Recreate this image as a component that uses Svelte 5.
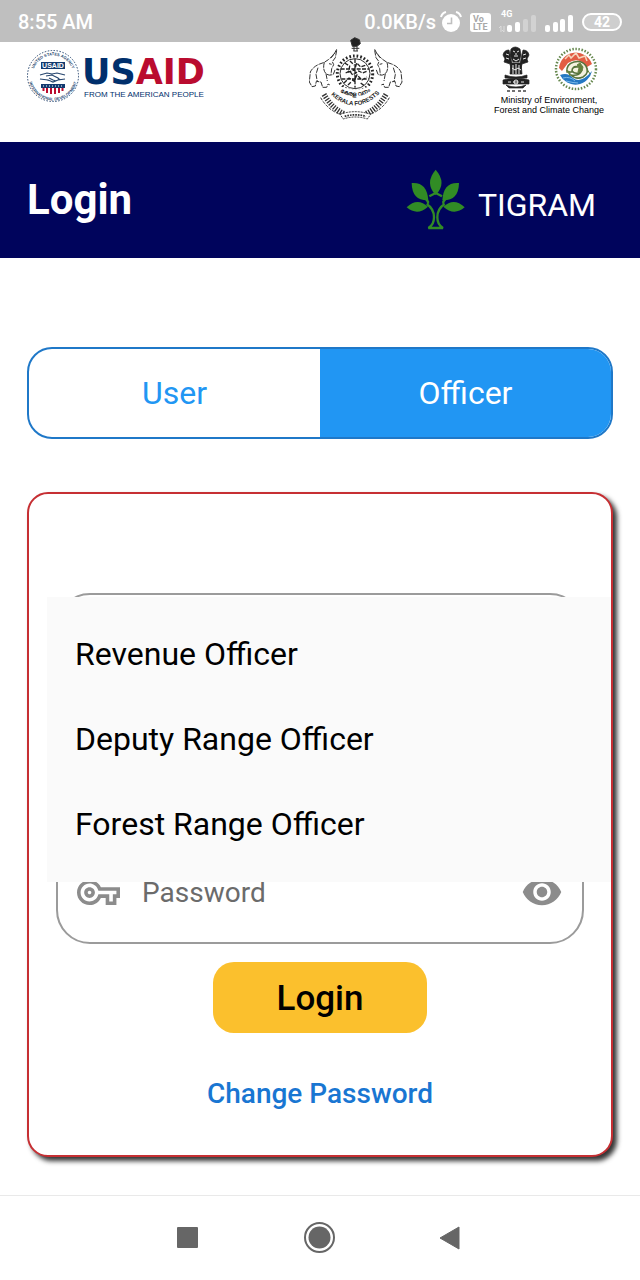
<script>
  const roles = ['Revenue Officer', 'Deputy Range Officer', 'Forest Range Officer'];
  let tab = $state('Officer');
  let role = $state('');
  let password = $state('');
  let reveal = $state(false);
</script>

{#snippet elephant()}
  <path d="M118 45l-9 17-16 14-12 8-14 5q-20 8-28 24l-3 30 8 14 10-2 3-14 14 2 5 16h12l4-10 14 8" />
  <path d="M118 48l-4 22-9 12 4 9-6 12-2 18M81 84q-6 22 5 34 10 8 22 2l6-16M86 118l4 22M62 100l-6 20 4 22M95 88l8 2M110 58l-10 14" />
{/snippet}

<div class="screen">
  <header class="status">
    <span>8:55 AM</span>
    <div class="indicators">
      <span>0.0KB/s</span>
      <svg width="22" height="24" viewBox="0 0 22 24" aria-hidden="true">
        <circle cx="11" cy="13" r="9" fill="#fff" />
        <path d="M1 7Q2 3 6 2M21 7Q20 3 16 2" fill="none" stroke="#fff" stroke-width="2" />
        <path d="M11.500 7.500V13.500H7" fill="none" stroke="#bfbfbf" stroke-width="1.600" />
      </svg>
      <svg class="volte" width="21" height="19" viewBox="0 0 21 19" aria-hidden="true">
        <rect width="21" height="19" rx="3" fill="#fff" />
        <text x="3" y="9" font-size="9">Vo</text>
        <text x="3" y="17" font-size="9">LTE</text>
      </svg>
      <svg class="signal" width="38" height="24" viewBox="0 0 38 24" aria-hidden="true">
        <text x="2" y="7" font-size="9">4G</text>
        <path d="M2 22v-6m-2 2l2-2M5 16v6m-2-2l2 2" fill="none" stroke="#dcdcdc" />
        <g fill="#fff">
          <rect x="8" y="15" width="5" height="7" rx="2" />
          <rect x="16" y="12" width="5" height="10" rx="2" />
          <rect x="24" y="9" width="5" height="13" rx="2" opacity=".3" />
          <rect x="32" y="5" width="5" height="17" rx="2" opacity=".3" />
        </g>
      </svg>
      <svg width="29" height="24" viewBox="0 0 29 24" aria-hidden="true">
        <g fill="#fff">
          <rect x="0" y="15" width="5" height="7" rx="2" />
          <rect x="8" y="12" width="5" height="10" rx="2" />
          <rect x="15" y="9" width="5" height="13" rx="2" />
          <rect x="23" y="5" width="5" height="17" rx="2" />
        </g>
      </svg>
      <span class="battery">42</span>
    </div>
  </header>

  <section class="logos">
    <div class="usaid">
      <svg width="54" height="54" viewBox="0 0 54 54" aria-hidden="true">
        <defs>
          <path id="ring-top" d="M6.500 27A20.500 20.500 0 0 1 47.500 27" />
          <path id="ring-bottom" d="M2.500 27A24.500 24.500 0 0 0 51.500 27" />
        </defs>
        <circle cx="27" cy="27" r="25.500" fill="none" stroke="#27466f" stroke-width="1" stroke-dasharray="1.500 1.500" />
        <text class="ring"><textPath href="#ring-top" startOffset="50%" text-anchor="middle">UNITED STATES AGENCY</textPath></text>
        <text class="ring"><textPath href="#ring-bottom" startOffset="50%" text-anchor="middle">INTERNATIONAL DEVELOPMENT</textPath></text>
        <rect x="15" y="13" width="24" height="7" fill="#123a70" />
        <text class="seal-name" x="27" y="19" text-anchor="middle">USAID</text>
        <path d="M14 26l7-2 5 1 5-1 8 2M14 30l8 1 5 2 5-2 7-1M20 27l6-1 6 3 2 2M23 29l4 2 3 1M21 31l4 1" fill="none" stroke="#27466f" stroke-width="1.200" />
        <path d="M15 35h24v4H15z" fill="#123a70" />
        <path d="M17 37h20" stroke="#fff" stroke-dasharray="1 2" />
        <path d="M17.500 39v3M21 39v5M25 39v6M29 39v6M33 39v5M36.500 39v3" stroke="#ba0c2f" stroke-width="2" />
      </svg>
      <div>
        <div class="usaid-name">US<b>AID</b></div>
        <div class="usaid-tag">FROM THE AMERICAN PEOPLE</div>
      </div>
    </div>

    <svg class="kerala" width="94" height="84" viewBox="35 8 282 252" aria-hidden="true">
      <defs>
        <path id="kf-arc" d="M88 168Q172 260 260 164" />
        <path id="kf-inner" d="M106 154Q172 216 242 152" />
      </defs>
      <g fill="none" stroke="#333" stroke-width="3">
        <path d="M160 18l12-8 14 6 3 12-10 8h-14z" fill="#222" />
        <path d="M163 42h23M168 50h14M170 36v14M179 36v14" />
        <g stroke-dasharray="16 3">
          {@render elephant()}
          <g transform="translate(350 0) scale(-1 1)">{@render elephant()}</g>
        </g>
        <circle cx="173" cy="118" r="53" stroke-width="9" stroke="#222" stroke-dasharray="5 6" />
        <circle cx="173" cy="118" r="45" />
        <path d="M130 104h86M132 134h82M173 74v86M142 86l15 9-3 18 18-6 6-21 12 12 18-6M140 146l15-15 15 9 9-18 15 15 15-9M145 116l12-6 9 12 18-12 12 6 15-6M158 80l12 12M190 146l12 9M152 152l9-9" stroke-width="4" stroke="#222" stroke-dasharray="12 4" />
        <path d="M70 190Q96 236 150 246M276 190Q250 236 196 246" stroke-dasharray="9 4" />
        <path d="M80 180Q104 222 140 238M266 180Q242 222 206 238" stroke-width="16" stroke-dasharray="4 4" />
        <path d="M128 240q45-16 92 0l-10 14q-36-12-72 0z" fill="#fff" stroke-dasharray="6 3" />
        <path d="M142 246q32-9 64 0" stroke-width="5" stroke-dasharray="5 3" />
      </g>
      <path d="M88 168Q172 256 260 164L244 140Q172 192 104 140z" fill="#fff" />
      <text class="kf-name"><textPath href="#kf-arc" startOffset="50%" text-anchor="middle">KERALA FORESTS</textPath></text>
      <text class="kf-local"><textPath href="#kf-inner" startOffset="50%" text-anchor="middle">കേരള വനം</textPath></text>
    </svg>

    <div class="ministry">
      <div class="ministry-art">
        <svg width="28" height="46" viewBox="0 0 28 46" aria-hidden="true">
          <g fill="#222" stroke="#222" stroke-width=".7">
            <path d="M9 3q4-4 9 0l1 6-2 7h-6L8 9z" />
            <path d="M7 4Q2 4 1 9l2 4-1 3 6 2 2 9h2L9 13z" />
            <path d="M21 4q5 0 6 5l-2 4 1 3-6 2-2 9h-2l3-14z" />
            <path d="M9 17h10l1 11H8z" />
            <path d="M3 29q11 4 22 0v3H3z" />
            <path d="M1 34q13-4 26 0v4H1z" />
            <path d="M4 39q10 4 20 0l-3 3H7z" />
          </g>
          <g fill="none" stroke="#fff" stroke-width=".9">
            <path d="M11 5l2 1M15 6l2-1M12 10h4M14 7v2M11 13l3 2 3-2M4 8l3 1M24 8l-3 1M4 12l3 1M24 12l-3 1M11 19v9M14 18v10M17 19v9M10 22l3 2 3-2 3 2M6 36h3M11 36h5M19 36h3" />
            <circle cx="14" cy="36" r="2" />
          </g>
          <path d="M5 45h3m2 0h3m3 0h3m2 0h3" stroke="#444" stroke-width="1.500" />
        </svg>
        <svg width="44" height="46" viewBox="0 0 44 46" aria-hidden="true">
          <circle cx="22" cy="23" r="20" fill="none" stroke="#67894f" stroke-width="2.500" stroke-dasharray="1.500 1.600" />
          <circle cx="22" cy="23" r="17" fill="#fff" />
          <path d="M5 22A17 17 0 0 1 38 18l-5 3Q25 10 14 17l-6 8z" fill="#e25d43" />
          <path d="M6 29q8-3 13 3 8 6 19-7A17 17 0 0 1 6 29z" fill="#2478c2" />
          <path d="M11 13l4-4 2 3 5-5 3 5 6-2 2 5" fill="none" stroke="#f5d6bd" stroke-width="1.500" />
          <path d="M13 26q-1-8 7-10 8-2 12 4 4 7-3 11-7 3-12-2 8 1 10-3-6 3-9-1 0-5 6-4-6-2-6 5z" fill="#f5f2df" stroke="#57733d" stroke-width="1.600" />
          <path d="M23 19l3-2 3 4-1 4-4 1 1-4zM12 24l4 2v4M33 23l3 5" fill="#65803e" stroke="#65803e" />
          <path d="M9 32q7-2 12 3M12 35q8 2 12 2" stroke="#79b8e8" fill="none" />
        </svg>
      </div>
      <div class="ministry-text">Ministry of Environment,<br />Forest and Climate Change</div>
    </div>
  </section>

  <section class="appbar">
    <h1>Login</h1>
    <div class="brand">
      <svg width="60" height="62" viewBox="0 0 180 186" aria-hidden="true">
        <g fill="#318c25">
          <path d="M89 2Q124 42 89 78Q55 42 89 2z" />
          <path d="M17 42Q63 38 67 94Q18 96 17 42z" />
          <path d="M159 42Q112 38 109 94Q158 96 159 42z" />
          <path d="M2 115Q34 84 66 113Q34 142 2 115z" />
          <path d="M176 115Q144 84 112 113Q144 142 176 115z" />
        </g>
        <path d="M62 105Q84 119 84 145Q84 168 67 177H111Q94 168 94 145Q94 119 116 105M58 88L66 98L66 104M120 88L112 98L112 104M70 82L89 72L108 82" fill="none" stroke="#318c25" stroke-width="7" />
      </svg>
      <span>TIGRAM</span>
    </div>
  </section>

  <main>
    <div class="tabs">
      {#each ['User', 'Officer'] as name}
        <button type="button" class:active={tab === name} aria-pressed={tab === name} onclick={() => (tab = name)}>{name}</button>
      {/each}
    </div>

    <form class="card" onsubmit={(e) => e.preventDefault()}>
      <div class="picker">
        <div class="field"></div>
        <div class="menu" role="listbox" aria-label="Officer">
          {#each roles as item}
            <button type="button" role="option" aria-selected={role === item} onclick={() => (role = item)}>{item}</button>
          {/each}
        </div>
      </div>

      <div class="field">
        <label for="password" aria-label="Password">
          <svg width="43" height="43" viewBox="0 0 24 24" aria-hidden="true">
            <path fill="#8c8c8c" d="M22 19h-6v-4h-2.680c-1.140 2.420-3.600 4-6.320 4-3.860 0-7-3.140-7-7s3.140-7 7-7c2.720 0 5.170 1.580 6.320 4H24v6h-2v4zm-4-2h2v-4h2v-2H11.940l-.23-.67C11.010 8.340 9.110 7 7 7c-2.760 0-5 2.240-5 5s2.240 5 5 5c2.110 0 4.010-1.340 4.710-3.330l.23-.67H18v4zM7 15c-1.650 0-3-1.350-3-3s1.350-3 3-3 3 1.350 3 3-1.350 3-3 3zm0-4c-.55 0-1 .45-1 1s.45 1 1 1 1-.45 1-1-.45-1-1-1z" />
          </svg>
        </label>
        <input id="password" type={reveal ? 'text' : 'password'} placeholder="Password" bind:value={password} />
        <button type="button" class="eye" aria-label="Password" aria-pressed={reveal} onclick={() => (reveal = !reveal)}>
          <svg width="42" height="42" viewBox="0 0 24 24" aria-hidden="true">
            <path fill="#8c8c8c" d="M12 4.500C7 4.500 2.730 7.610 1 12c1.730 4.390 6 7.500 11 7.500s9.270-3.110 11-7.500c-1.730-4.390-6-7.500-11-7.500zM12 17c-2.760 0-5-2.240-5-5s2.240-5 5-5 5 2.240 5 5-2.240 5-5 5zm0-8c-1.660 0-3 1.340-3 3s1.340 3 3 3 3-1.340 3-3-1.340-3-3-3z" />
          </svg>
        </button>
      </div>

      <button type="submit" class="submit">Login</button>
      <a href="#change-password">Change Password</a>
    </form>
  </main>

  <nav>
    <svg width="34" height="34" viewBox="0 0 34 34" aria-hidden="true"><rect x="6" y="6" width="21" height="21" rx="1" fill="#666" /></svg>
    <svg width="34" height="34" viewBox="0 0 34 34" aria-hidden="true">
      <circle cx="16.500" cy="16.500" r="14.500" fill="none" stroke="#666" stroke-width="2" />
      <circle cx="16.500" cy="16.500" r="11" fill="#666" />
    </svg>
    <svg width="34" height="34" viewBox="0 0 34 34" aria-hidden="true"><path d="M5 17L24 6v22z" fill="#666" stroke="#666" stroke-linejoin="round" /></svg>
  </nav>
</div>

<style>
  :global(body) {
    margin: 0;
    background: #fff;
  }
  .screen {
    display: flex;
    flex-direction: column;
    min-height: 100vh;
    font-family: Roboto, sans-serif;
    color: #000;
  }
  button,
  input {
    font-family: inherit;
    border: 0;
    padding: 0;
    margin: 0;
    background: none;
  }
  svg {
    display: block;
    flex: none;
  }
  .status {
    box-sizing: border-box;
    display: flex;
    justify-content: space-between;
    align-items: center;
    height: 42px;
    padding: 2px 18px 0;
    background: #bfbfbf;
    color: #fff;
    font-size: 20px;
    font-weight: 500;
  }
  .indicators {
    display: flex;
    align-items: center;
    gap: 8px;
  }
  .indicators span:first-child {
    margin-right: -4px;
  }
  .volte text {
    font-weight: 700;
    fill: #a8a8a8;
  }
  .signal text {
    font-weight: 700;
    fill: #fff;
  }
  .battery {
    box-sizing: border-box;
    width: 40px;
    height: 18px;
    border: 2px solid #fff;
    border-radius: 9px;
    font-size: 14px;
    line-height: 14px;
    font-weight: 700;
    text-align: center;
    background: #cecece;
  }
  .logos {
    display: flex;
    justify-content: space-between;
    align-items: flex-start;
    height: 100px;
    padding: 0 36px 0 26px;
  }
  .usaid {
    display: flex;
    gap: 2px;
    padding-top: 7px;
  }
  .usaid-name {
    font: 700 35px/36px "DejaVu Sans", sans-serif;
    color: #002f6c;
    padding-top: 5px;
  }
  .usaid-name b {
    color: #ba0c2f;
  }
  .usaid-tag {
    padding-left: 2px;
    font: 8px/10px "Liberation Sans", sans-serif;
    color: #002f6c;
    white-space: nowrap;
  }
  .ring {
    font: 700 4px "Liberation Sans", sans-serif;
    fill: #27466f;
  }
  .seal-name {
    font: 700 7px "Liberation Sans", sans-serif;
    fill: #fff;
  }
  .kerala {
    position: relative;
    margin-top: -5px;
    margin-left: 14px;
  }
  .kf-name {
    font: 700 18px "Liberation Sans", sans-serif;
    fill: #222;
  }
  .kf-local {
    font: 700 18px "Noto Sans", sans-serif;
    fill: #222;
  }
  .ministry {
    padding-top: 4px;
  }
  .ministry-art {
    display: flex;
    justify-content: center;
    gap: 24px;
    padding-left: 2px;
  }
  .ministry-text {
    padding-top: 3px;
    font: 9px/10px "Liberation Sans", sans-serif;
    text-align: center;
    white-space: nowrap;
  }
  .appbar {
    display: flex;
    justify-content: space-between;
    align-items: center;
    height: 116px;
    padding: 0 44px 0 27px;
    background: #00045c;
    color: #fff;
  }
  h1 {
    margin: 0;
    font-size: 42px;
    line-height: 48px;
    font-weight: 700;
  }
  .brand {
    display: flex;
    align-items: center;
    gap: 12px;
    font-size: 32px;
  }
  .brand span {
    padding-top: 10px;
  }
  main {
    display: flex;
    flex-direction: column;
    flex: 1;
    gap: 53px;
    padding: 89px 27px 38px;
  }
  .tabs {
    display: flex;
    height: 88px;
    border: 2px solid #1f78c8;
    border-radius: 25px;
    overflow: hidden;
  }
  .tabs button {
    flex: 1;
    color: #2196f3;
    font-size: 32px;
  }
  .tabs .active {
    background: #2196f3;
    color: #fff;
  }
  .card {
    display: flex;
    flex-direction: column;
    align-items: center;
    padding: 99px 27px 45px;
    border: 2px solid #c62f33;
    border-radius: 21px;
    background: #fff;
    box-shadow: 4px 4px 5px #000000cc;
  }
  .picker {
    position: relative;
    align-self: stretch;
    margin-bottom: 143px;
  }
  .field {
    box-sizing: border-box;
    display: flex;
    align-items: center;
    align-self: stretch;
    gap: 22px;
    height: 104px;
    padding: 0 19px;
    border: 2px solid #9b9b9b;
    border-radius: 34px;
  }
  .menu {
    position: absolute;
    z-index: 1;
    top: 4px;
    left: -9px;
    right: -27px;
    display: flex;
    flex-direction: column;
    padding: 14px 0 16px;
    background: #fafafa;
  }
  .menu button {
    height: 85px;
    padding: 0 28px;
    font-size: 32px;
    text-align: left;
    color: #000;
  }
  .field input {
    flex: 1;
    min-width: 0;
    height: 40px;
    font-size: 28px;
    color: #000;
    outline: 0;
  }
  .field input::placeholder {
    color: #6b6b6b;
    opacity: 1;
  }
  .submit {
    width: 214px;
    height: 71px;
    margin-top: 18px;
    padding-top: 2px;
    border-radius: 21px;
    background: #fbc02d;
    color: #000;
    font-size: 35px;
    font-weight: 500;
  }
  .card a {
    margin-top: 45px;
    font-size: 28px;
    line-height: 32px;
    font-weight: 500;
    color: #1976d2;
    text-decoration: none;
  }
  nav {
    display: flex;
    justify-content: center;
    align-items: center;
    gap: 98px;
    height: 84px;
    border-top: 1px solid #e9e9e9;
  }
</style>
